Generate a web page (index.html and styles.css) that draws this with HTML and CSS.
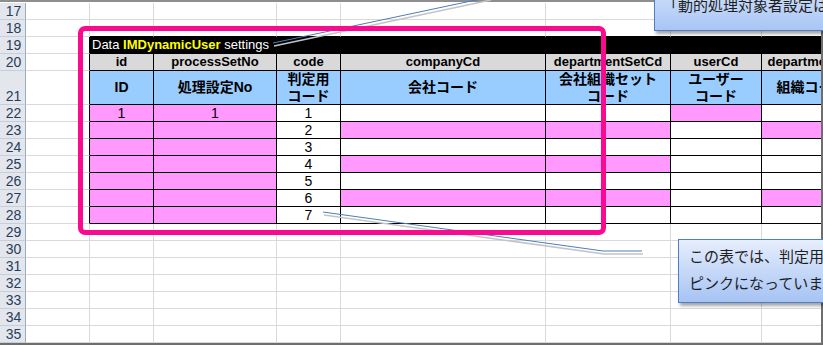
FILE: index.html
```html
<!DOCTYPE html>
<html lang="ja">
<head>
<meta charset="utf-8">
<title>IMDynamicUser settings</title>
<link rel="stylesheet" href="styles.css">
</head>
<body>
<div class="page">
  <div class="sheet">
    <div class="grid">
      <!-- 17 -->
      <div class="c rh">17</div><div class="c"></div><div class="c"></div><div class="c"></div><div class="c"></div><div class="c"></div><div class="c"></div><div class="c"></div><div class="c"></div>
      <!-- 18 -->
      <div class="c rh">18</div><div class="c"></div><div class="c bb"></div><div class="c bb"></div><div class="c bb"></div><div class="c bb"></div><div class="c bb"></div><div class="c bb"></div><div class="c bb"></div>
      <!-- 19 -->
      <div class="c rh">19</div><div class="c ar"></div>
      <div class="c band"><span>Data <b class="hl">IMDynamicUser</b> settings</span></div>
      <!-- 20 -->
      <div class="c rh">20</div><div class="c ar"></div>
      <div class="c t hd">id</div><div class="c t hd">processSetNo</div><div class="c t hd">code</div><div class="c t hd">companyCd</div><div class="c t hd">departmentSetCd</div><div class="c t hd">userCd</div><div class="c t hd">departmentCd</div>
      <!-- 21 -->
      <div class="c rh">21</div><div class="c ar"></div>
      <div class="c t jp">ID</div><div class="c t jp">処理設定No</div><div class="c t jp"><span>判定用<br>コード</span></div><div class="c t jp">会社コード</div><div class="c t jp"><span>会社組織セット<br>コード</span></div><div class="c t jp"><span>ユーザー<br>コード</span></div><div class="c t jp">組織コード</div>
      <!-- 22 -->
      <div class="c rh">22</div><div class="c ar"></div>
      <div class="c t p n">1</div><div class="c t p n">1</div><div class="c t n">1</div><div class="c t"></div><div class="c t"></div><div class="c t p"></div><div class="c t"></div>
      <!-- 23 -->
      <div class="c rh">23</div><div class="c ar"></div>
      <div class="c t p"></div><div class="c t p"></div><div class="c t n">2</div><div class="c t p"></div><div class="c t p"></div><div class="c t"></div><div class="c t p"></div>
      <!-- 24 -->
      <div class="c rh">24</div><div class="c ar"></div>
      <div class="c t p"></div><div class="c t p"></div><div class="c t n">3</div><div class="c t"></div><div class="c t"></div><div class="c t"></div><div class="c t"></div>
      <!-- 25 -->
      <div class="c rh">25</div><div class="c ar"></div>
      <div class="c t p"></div><div class="c t p"></div><div class="c t n">4</div><div class="c t p"></div><div class="c t p"></div><div class="c t"></div><div class="c t"></div>
      <!-- 26 -->
      <div class="c rh">26</div><div class="c ar"></div>
      <div class="c t p"></div><div class="c t p"></div><div class="c t n">5</div><div class="c t"></div><div class="c t"></div><div class="c t"></div><div class="c t"></div>
      <!-- 27 -->
      <div class="c rh">27</div><div class="c ar"></div>
      <div class="c t p"></div><div class="c t p"></div><div class="c t n">6</div><div class="c t p"></div><div class="c t p"></div><div class="c t"></div><div class="c t p"></div>
      <!-- 28 -->
      <div class="c rh">28</div><div class="c ar"></div>
      <div class="c t p"></div><div class="c t p"></div><div class="c t n">7</div><div class="c t"></div><div class="c t"></div><div class="c t"></div><div class="c t"></div>
      <!-- 29-35 -->
      <div class="c rh">29</div><div class="c"></div><div class="c"></div><div class="c"></div><div class="c"></div><div class="c"></div><div class="c"></div><div class="c"></div><div class="c"></div>
      <div class="c rh">30</div><div class="c"></div><div class="c"></div><div class="c"></div><div class="c"></div><div class="c"></div><div class="c"></div><div class="c"></div><div class="c"></div>
      <div class="c rh">31</div><div class="c"></div><div class="c"></div><div class="c"></div><div class="c"></div><div class="c"></div><div class="c"></div><div class="c"></div><div class="c"></div>
      <div class="c rh">32</div><div class="c"></div><div class="c"></div><div class="c"></div><div class="c"></div><div class="c"></div><div class="c"></div><div class="c"></div><div class="c"></div>
      <div class="c rh">33</div><div class="c"></div><div class="c"></div><div class="c"></div><div class="c"></div><div class="c"></div><div class="c"></div><div class="c"></div><div class="c"></div>
      <div class="c rh">34</div><div class="c"></div><div class="c"></div><div class="c"></div><div class="c"></div><div class="c"></div><div class="c"></div><div class="c"></div><div class="c"></div>
      <div class="c rh">35</div><div class="c"></div><div class="c"></div><div class="c"></div><div class="c"></div><div class="c"></div><div class="c"></div><div class="c"></div><div class="c"></div>
    </div>
  </div>

  <svg class="connectors" width="823" height="345" viewBox="0 0 823 345">
    <g class="shadow">
      <polyline points="274,46 491,0"/>
      <polyline points="324,215 604,254 643,254"/>
    </g>
    <g class="line">
      <polyline points="273,43 490,-3"/>
      <polyline points="323,212 603,251 642,251"/>
    </g>
  </svg>

  <div class="frame"></div>

  <div class="callout callout-top">
    <div class="callout-text">「動的処理対象者設定は、</div>
  </div>
  <div class="callout callout-bottom">
    <div class="callout-text">この表では、判定用コードごとの条件が</div>
    <div class="callout-text">ピンクになっています。</div>
  </div>
</div>
</body>
</html>
```

FILE: styles.css
```css
* { box-sizing: border-box; }

html, body {
  margin: 0;
  padding: 0;
  background: #ffffff;
}

.page {
  position: relative;
  width: 823px;
  height: 345px;
  overflow: hidden;
  font-family: "Liberation Sans", "Noto Sans CJK JP", sans-serif;
}

.sheet {
  width: 823px;
  height: 345px;
  overflow: hidden;
  border-top: 2px solid #8e8e8e;
  border-right: 2px solid #6e6e6e;
  border-bottom: 2px solid #6e6e6e;
  padding-top: 1px;
  background: #ffffff;
}

.grid {
  display: grid;
  grid-template-columns: 26px 64px 64px 123px 64px 205px 125px 91px 100px;
  grid-template-rows: 17px 17px 17px 17px 34px repeat(14, 17px);
  width: 862px;
}

.c {
  border-right: 1px solid #d9d9d9;
  border-bottom: 1px solid #d9d9d9;
  display: flex;
  align-items: center;
  justify-content: center;
  white-space: nowrap;
  font-size: 14px;
  line-height: 16px;
  color: #000;
}

.rh {
  background: #e3e7ed;
  border-right: 1px solid #9eabbb;
  border-bottom: 1px solid #c8ced6;
  color: #283d5a;
  font-size: 14px;
  align-items: flex-end;
  padding-left: 2px;
}

.bb { border-bottom-color: #000; }
.ar { border-right-color: #000; }

.band {
  grid-column: span 7;
  background: #000;
  border-right-color: #000;
  border-bottom-color: #000;
  color: #fff;
  font-size: 13px;
  justify-content: flex-start;
  padding-left: 2px;
}

.hl {
  color: #ffff00;
  font-weight: bold;
}

.t {
  border-right-color: #000;
  border-bottom-color: #000;
}

.hd {
  background: #d9d9d9;
  font-size: 13px;
  font-weight: bold;
}

.jp {
  background: #99ccff;
  font-size: 14px;
  font-weight: bold;
  line-height: 17px;
  text-align: center;
}

.p { background: #ff99ff; }

.n { font-size: 14px; }

.connectors {
  position: absolute;
  left: 0;
  top: 0;
  pointer-events: none;
  overflow: visible;
}

.connectors polyline {
  fill: none;
  stroke-width: 1;
}

.connectors .line polyline { stroke: #4a7ebb; }
.connectors .shadow polyline { stroke: #c4c4c4; stroke-width: 1.5; }

.frame {
  position: absolute;
  left: 78px;
  top: 26px;
  width: 528px;
  height: 209px;
  border: 5px solid #f90a8e;
  border-radius: 7px;
}

.callout {
  position: absolute;
  width: 240px;
  border: 1px solid #4f7fbf;
  box-shadow: 2px 3px 3px rgba(0, 0, 0, 0.35);
  font-family: "Noto Sans CJK JP", sans-serif;
  font-size: 15px;
  color: #1e1e1e;
  white-space: nowrap;
  display: flex;
  flex-direction: column;
}

.callout-top {
  left: 654px;
  top: -40px;
  height: 71px;
  background: linear-gradient(to bottom, #eef3fd, #a8c5f5);
  justify-content: flex-end;
  padding: 0 0 12px 8px;
}

.callout-bottom {
  left: 678px;
  top: 239px;
  height: 64px;
  background: linear-gradient(to bottom, #e6eefc, #a6c3f4);
  padding: 2px 0 0 10px;
}

.callout-text {
  line-height: 27px;
}
```
